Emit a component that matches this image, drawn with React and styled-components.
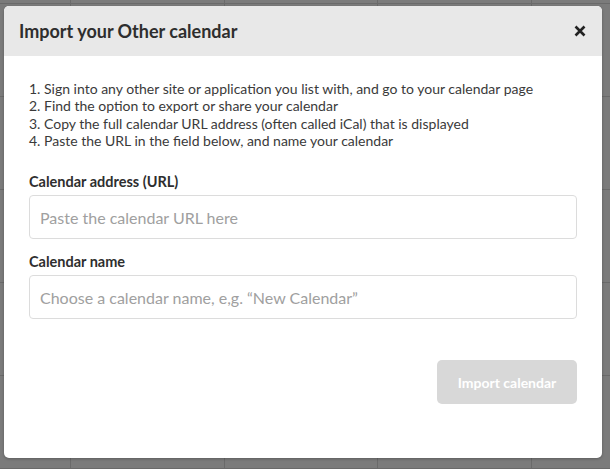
import styled, { createGlobalStyle } from "styled-components"

const Global = createGlobalStyle`
  html, body {
    margin: 0;
    padding: 0;
    width: 610px;
    height: 469px;
    overflow: hidden;
    font-family: Lato, "Open Sans", Arial, sans-serif;
  }
  * { box-sizing: border-box; }
`

const Page = styled.div`
  position: relative;
  width: 610px;
  height: 469px;
  overflow: hidden;
  background: #7b7b7b;
`

const Calendar = styled.div`
  display: grid;
  grid-template-columns: 72px repeat(4, 153.5px);
  grid-template-rows: 5px repeat(5, 93px);
  margin-left: -1px;
  margin-top: -1px;
`

const Cell = styled.div`
  border-right: 1px solid #6a6a6a;
  border-bottom: 1px solid #6a6a6a;
`

const Modal = styled.div`
  position: absolute;
  left: 4px;
  top: 6px;
  width: 598px;
  height: 452px;
  background: #fff;
  border-radius: 5px;
  overflow: hidden;
  display: flex;
  flex-direction: column;
  box-shadow: 0 1px 3px rgba(0, 0, 0, 0.25);
`

const Header = styled.div`
  height: 50px;
  background: #e8e8e8;
  display: flex;
  align-items: center;
  justify-content: space-between;
  padding: 0 16px 0 15px;
`

const Title = styled.h2`
  margin: 0;
  font-size: 18px;
  font-weight: 700;
  color: #2e2e2e;
`

const Close = styled.button`
  border: 0;
  background: none;
  padding: 0;
  width: 12px;
  height: 12px;
  display: flex;
  cursor: pointer;
`

const Body = styled.div`
  padding: 24px 25px 0 25px;
  display: flex;
  flex-direction: column;
`

const Steps = styled.ol`
  margin: 0;
  padding: 0;
  list-style: none;
  font-size: 14px;
  line-height: 17.3px;
  color: #3a3a3a;
`

const Label = styled.label`
  display: block;
  margin-top: ${(p) => p.$top}px;
  font-size: 14.5px;
  line-height: 17px;
  font-weight: 700;
  color: #2e2e2e;
`

const Input = styled.input`
  display: block;
  margin-top: 5px;
  width: 100%;
  height: 44px;
  border: 1px solid #dcdcdc;
  border-radius: 4px;
  padding: 0 10px;
  font-family: inherit;
  font-size: 16px;
  color: #333;
  outline: none;
  &::placeholder {
    color: #a0a0a0;
  }
`

const Footer = styled.div`
  display: flex;
  justify-content: flex-end;
  margin-top: 41px;
`

const Button = styled.button`
  width: 140px;
  height: 44px;
  border: 0;
  border-radius: 5px;
  background: #d8d8d8;
  color: #fff;
  font-family: inherit;
  font-size: 14px;
  font-weight: 700;
`

const steps = [
  "1. Sign into any other site or application you list with, and go to your calendar page",
  "2. Find the option to export or share your calendar",
  "3. Copy the full calendar URL address (often called iCal) that is displayed",
  "4. Paste the URL in the field below, and name your calendar",
]

const App = () => {
  const cells = Array.from({ length: 30 })

  return (
    <>
      <Global />
      <Page>
        <Calendar>
          {cells.map((_, i) => (
            <Cell key={i} />
          ))}
        </Calendar>
        <Modal>
          <Header>
            <Title>Import your Other calendar</Title>
            <Close aria-label="Close">
              <svg width="12" height="12" viewBox="0 0 12 12">
                <path d="M1.5 1.5 L10.5 10.5 M10.5 1.5 L1.5 10.5" stroke="#222" strokeWidth="2.6" strokeLinecap="butt" />
              </svg>
            </Close>
          </Header>
          <Body>
            <Steps>
              {steps.map((s) => (
                <li key={s}>{s}</li>
              ))}
            </Steps>
            <Label $top={24}>Calendar address (URL)</Label>
            <Input placeholder="Paste the calendar URL here" />
            <Label $top={14}>Calendar name</Label>
            <Input placeholder="Choose a calendar name, e,g. “New Calendar”" />
            <Footer>
              <Button>Import calendar</Button>
            </Footer>
          </Body>
        </Modal>
      </Page>
    </>
  )
}

export default App
